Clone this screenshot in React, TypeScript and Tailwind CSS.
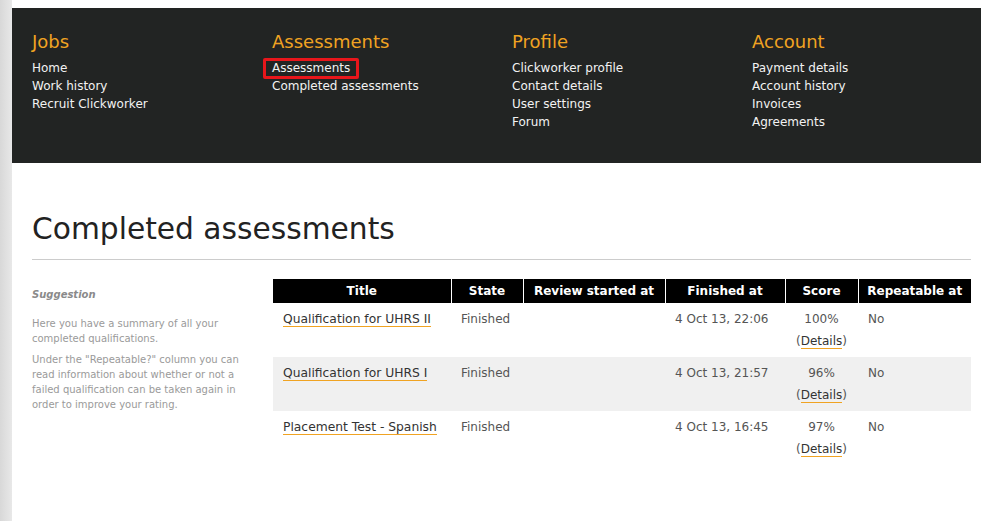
import React from 'react';

const navColumns = [
  { title: 'Jobs', links: ['Home', 'Work history', 'Recruit Clickworker'] },
  { title: 'Assessments', links: ['Assessments', 'Completed assessments'] },
  { title: 'Profile', links: ['Clickworker profile', 'Contact details', 'User settings', 'Forum'] },
  { title: 'Account', links: ['Payment details', 'Account history', 'Invoices', 'Agreements'] },
];

const rows = [
  { title: 'Qualification for UHRS II', state: 'Finished', review: '', finished: '4 Oct 13, 22:06', score: '100%', repeat: 'No' },
  { title: 'Qualification for UHRS I', state: 'Finished', review: '', finished: '4 Oct 13, 21:57', score: '96%', repeat: 'No' },
  { title: 'Placement Test - Spanish', state: 'Finished', review: '', finished: '4 Oct 13, 16:45', score: '97%', repeat: 'No' },
];

const App: React.FC = () => {
  return (
    <div className="flex min-h-[521px] bg-white font-['DejaVu_Sans',Verdana,sans-serif]">
      <div className="w-[12px] shrink-0 bg-gradient-to-r from-[#d8d8d8] to-[#e8e8e8]" />
      <div className="flex-1 pt-[8px]">
        <div className="bg-[#222423] h-[155px] pl-[20px] pt-[23px] grid grid-cols-[240px_240px_240px_1fr]">
          {navColumns.map((col) => (
            <div key={col.title}>
              <h3 className="text-[18px] leading-[22px] text-[#f0a322] mb-[6px]">{col.title}</h3>
              <ul className="text-[12px] leading-[18px] text-[#f2f2f2]">
                {col.links.map((l, i) => (
                  <li key={l} className="h-[18px]">
                    {col.title === 'Assessments' && i === 0 ? (
                      <span className="inline-block -ml-[9px] -mt-[3px] px-[6px] border-[3px] border-[#e8161b] rounded-[2px] leading-[15px]">{l}</span>
                    ) : (
                      l
                    )}
                  </li>
                ))}
              </ul>
            </div>
          ))}
        </div>

        <div className="px-[20px] pr-[10px]">
          <h1 className="mt-[48px] text-[29.7px] leading-[36px] text-[#222] pb-[12px] border-b border-[#cccccc]">Completed assessments</h1>

          <div className="flex mt-[19px]">
            <div className="w-[241px] shrink-0 pr-[30px] text-[10px] leading-[15px] text-[#9a9a9a]">
              <p className="italic font-bold text-[#8a8a8a] mt-[8px] mb-[14px]">Suggestion</p>
              <p className="mb-[6px]">Here you have a summary of all your completed qualifications.</p>
              <p>Under the "Repeatable?" column you can read information about whether or not a failed qualification can be taken again in order to improve your rating.</p>
            </div>

            <table className="w-[698px] border-collapse text-[12px] text-[#555]">
              <thead>
                <tr className="bg-black text-white font-bold text-[12px] h-[24px]">
                  <th className="w-[178px] border-r border-white font-bold">Title</th>
                  <th className="w-[72px] border-r border-white font-bold">State</th>
                  <th className="w-[142px] border-r border-white font-bold">Review started at</th>
                  <th className="w-[120px] border-r border-white font-bold">Finished at</th>
                  <th className="w-[73px] border-r border-white font-bold">Score</th>
                  <th className="font-bold">Repeatable at</th>
                </tr>
              </thead>
              <tbody>
                {rows.map((r, i) => (
                  <tr key={r.title} className={`h-[54px] align-top leading-[22px] ${i === 1 ? 'bg-[#f0f0f0]' : ''}`}>
                    <td className="pl-[10px] pt-[5px]">
                      <span className="text-[#333] text-[12.3px] border-b border-[#f0a322]">{r.title}</span>
                    </td>
                    <td className="pl-[10px] pt-[5px]">{r.state}</td>
                    <td className="pt-[5px]">{r.review}</td>
                    <td className="pl-[10px] pt-[5px]">{r.finished}</td>
                    <td className="text-center pt-[5px]">
                      <div>{r.score}</div>
                      <div>
                        (<span className="text-[#333] border-b border-[#f0a322]">Details</span>)
                      </div>
                    </td>
                    <td className="pl-[10px] pt-[5px]">{r.repeat}</td>
                  </tr>
                ))}
              </tbody>
            </table>
          </div>
        </div>
      </div>
    </div>
  );
};

export default App;
